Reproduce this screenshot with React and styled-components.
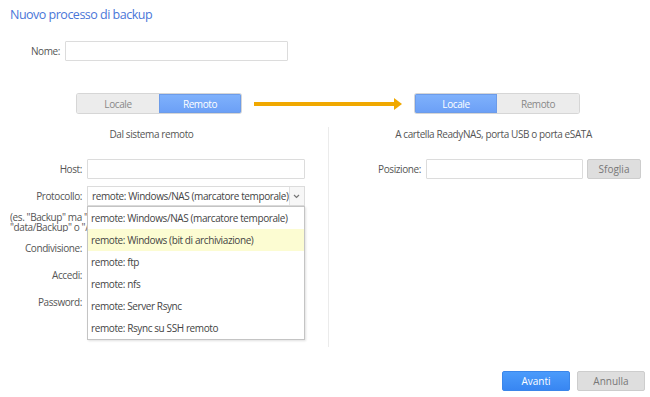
import React from "react";
import styled, { createGlobalStyle } from "styled-components";

const Global = createGlobalStyle`
body {
    margin: 0;
    background: #fff;
}
`

const Page = styled.div`
width: 650px;
height: 397px;
position: relative;
overflow: hidden;
font-family: "Open Sans", "Liberation Sans", sans-serif;
font-size: 10px;
letter-spacing: -0.4px;
color: #555;
`

const Title = styled.h1`
margin: 0;
padding: 7px 10px 0;
font-size: 12.5px;
letter-spacing: -0.5px;
line-height: 16px;
font-weight: normal;
color: #4a76d8;
`

const Row = styled.div`
display: flex;
align-items: center;
gap: ${p => p.gap || 5}px;
margin-top: ${p => p.top || 0}px;
`

const Label = styled.label`
width: ${p => p.w}px;
text-align: right;
color: #555;
flex-shrink: 0;
`

const Input = styled.input`
box-sizing: border-box;
width: ${p => p.w}px;
height: 20px;
border: 1px solid #dcdcdc;
border-radius: 1px;
padding: 0 4px;
font: inherit;
background: #fff;
`

const ModeRow = styled.div`
display: flex;
align-items: center;
margin-top: 33px;
padding-left: 77px;
`

const Toggle = styled.div`
display: flex;
width: 164px;
height: 19px;
border-radius: 2px;
overflow: hidden;
box-shadow: 0 0 0 1px #d6d6d6;
`

const ToggleHalf = styled.div`
flex: 1;
display: flex;
align-items: center;
justify-content: center;
color: ${p => p.active ? "#fff" : "#888"};
background: ${p => p.active ? "linear-gradient(#80b2fc, #6b9ff6)" : "#ececec"};
box-shadow: ${p => p.active ? "inset 0 0 0 1px #6d9ce9" : "none"};
`

const Arrow = styled.svg`
margin: 0 13px;
display: block;
`

const Columns = styled.div`
display: grid;
grid-template-columns: 329px 1fr;
margin-top: 14px;
`

const Column = styled.div`
height: 220px;
border-right: ${p => p.divider ? "1px solid #ebebeb" : "none"};
`

const Subtitle = styled.div`
line-height: 14px;
text-align: center;
color: #555;
padding: ${p => p.pad};
`

const Form = styled.div`
display: flex;
flex-direction: column;
gap: 7px;
margin-top: 18px;
`

const SelectWrap = styled.div`
position: relative;
width: 218px;
height: 20px;
box-sizing: border-box;
border: 1px solid #dcdcdc;
display: flex;
align-items: center;
`

const SelectText = styled.div`
flex: 1;
padding-left: 4px;
color: #444;
white-space: nowrap;
`

const SelectButton = styled.div`
width: 16px;
height: 18px;
border-left: 1px solid #e2e2e2;
display: flex;
align-items: center;
justify-content: center;
background: #f7f7f7;
`

const Dropdown = styled.ul`
position: absolute;
top: 19px;
left: -1px;
width: 216px;
margin: 0;
padding: 0;
list-style: none;
background: #fff;
border: 1px solid #c4c4c4;
box-shadow: 1px 1px 2px rgba(0, 0, 0, 0.12);
z-index: 5;
`

const Option = styled.li`
height: 22px;
line-height: 22px;
padding-left: 3px;
color: #444;
white-space: nowrap;
background: ${p => p.hover ? "#fcfcd2" : "transparent"};
`

const Hint = styled.div`
margin: -1px 0 -1px 10px;
width: 77px;
overflow: hidden;
line-height: 10px;
color: #555;
white-space: nowrap;
`

const Button = styled.button`
box-sizing: border-box;
width: ${p => p.w}px;
height: 20px;
border-radius: 2px;
font: inherit;
cursor: pointer;
border: 1px solid ${p => p.primary ? "#3a86ea" : "#cdcdcd"};
color: ${p => p.primary ? "#fff" : "#777"};
background: ${p => p.primary ? "linear-gradient(#4b9bfb, #3886f2)" : "#dedede"};
`

const Footer = styled.div`
display: flex;
justify-content: flex-end;
gap: 7px;
padding-right: 5px;
margin-top: 24px;
`

const protocols = [
    "remote: Windows/NAS (marcatore temporale)",
    "remote: Windows (bit di archiviazione)",
    "remote: ftp",
    "remote: nfs",
    "remote: Server Rsync",
    "remote: Rsync su SSH remoto",
]

const App = () => {
    return (
        <Page>
            <Global />
            <Title>Nuovo processo di backup</Title>
            <Row top={18}>
                <Label w={60}>Nome:</Label>
                <Input w={223} />
            </Row>

            <ModeRow>
                <Toggle>
                    <ToggleHalf>Locale</ToggleHalf>
                    <ToggleHalf active>Remoto</ToggleHalf>
                </Toggle>
                <Arrow width="148" height="12" viewBox="0 0 148 12">
                    <rect x="0" y="4" width="142" height="4" fill="#f0a800" />
                    <polygon points="140,0 148,6 140,12" fill="#f0a800" />
                </Arrow>
                <Toggle>
                    <ToggleHalf active>Locale</ToggleHalf>
                    <ToggleHalf>Remoto</ToggleHalf>
                </Toggle>
            </ModeRow>

            <Columns>
                <Column divider>
                    <Subtitle pad="0 25px 0 0">Dal sistema remoto</Subtitle>
                    <Form>
                        <Row>
                            <Label w={82}>Host:</Label>
                            <Input w={218} />
                        </Row>
                        <Row>
                            <Label w={82}>Protocollo:</Label>
                            <SelectWrap>
                                <SelectText>{protocols[0]}</SelectText>
                                <SelectButton>
                                    <svg width="7" height="5" viewBox="0 0 7 5">
                                        <path d="M1 1 L3.5 3.5 L6 1" stroke="#777" strokeWidth="1.2" fill="none" />
                                    </svg>
                                </SelectButton>
                                <Dropdown>
                                    {protocols.map((p, i) => (
                                        <Option key={p} hover={i === 1}>{p}</Option>
                                    ))}
                                </Dropdown>
                            </SelectWrap>
                        </Row>
                        <Hint>
                            (es. "Backup" ma "/Backup"<br />
                            "data/Backup" o "/data"
                        </Hint>
                        <Row>
                            <Label w={82}>Condivisione:</Label>
                            <Input w={218} />
                        </Row>
                        <Row>
                            <Label w={82}>Accedi:</Label>
                            <Input w={218} />
                        </Row>
                        <Row>
                            <Label w={82}>Password:</Label>
                            <Input w={218} type="password" />
                        </Row>
                    </Form>
                </Column>
                <Column>
                    <Subtitle pad="0 0 0 8px">A cartella ReadyNAS, porta USB o porta eSATA</Subtitle>
                    <Form>
                        <Row gap={4}>
                            <Label w={92}>Posizione:</Label>
                            <Input w={157} style={{ marginLeft: 1 }} />
                            <Button w={54}>Sfoglia</Button>
                        </Row>
                    </Form>
                </Column>
            </Columns>

            <Footer>
                <Button primary w={68}>Avanti</Button>
                <Button w={68}>Annulla</Button>
            </Footer>
        </Page>
    )
}

export default App;
